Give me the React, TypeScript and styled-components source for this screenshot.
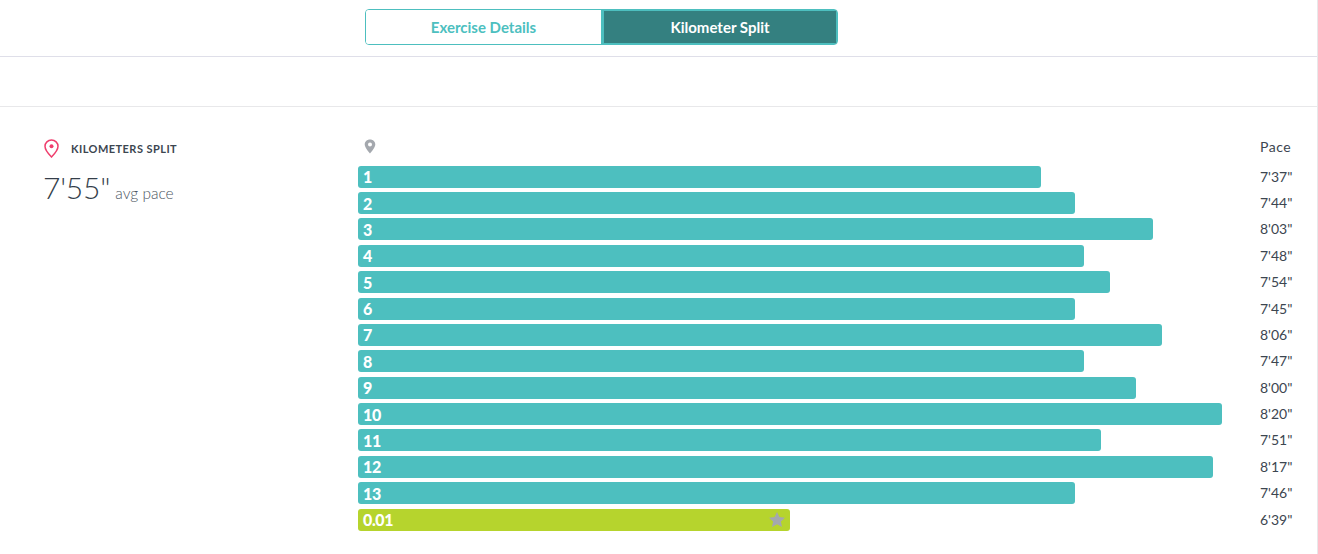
import React from "react";
import styled, { createGlobalStyle } from "styled-components";

const Global = createGlobalStyle`
  html, body { margin: 0; padding: 0; background: #fff; }
  body { font-family: Lato, "Liberation Sans", sans-serif; color: #3c4650; }
`;

const Page = styled.div`
  width: 1318px;
  height: 554px;
  overflow: hidden;
  box-sizing: border-box;
  border-right: 1px solid #e8e8ea;
`;

const TopBar = styled.div`
  height: 57px;
  box-sizing: border-box;
  border-bottom: 1px solid #dfdfe9;
  padding: 9px 0 0 365px;
`;

const Tabs = styled.div`
  display: flex;
  width: 473px;
  height: 36px;
  box-sizing: border-box;
  border: 1px solid #4dbfbf;
  border-radius: 4px;
  overflow: hidden;
`;

const Tab = styled.div<{ $active?: boolean }>`
  box-sizing: border-box;
  width: ${(p) => (p.$active ? 236 : 235)}px;
  display: flex;
  align-items: center;
  justify-content: center;
  font-size: 15px;
  font-weight: 700;
  color: ${(p) => (p.$active ? "#fff" : "#4dbfbf")};
  background: ${(p) => (p.$active ? "#348080" : "#fff")};
  border: ${(p) => (p.$active ? "1px solid #4dbfbf" : "none")};
  border-left-width: ${(p) => (p.$active ? "3px" : "0")};
`;

const SubBar = styled.div`
  height: 50px;
  box-sizing: border-box;
  border-bottom: 1px solid #e8e8ea;
`;

const Content = styled.div`
  display: flex;
  padding-top: 29px;
`;

const Summary = styled.div`
  width: 314px;
  margin-left: 44px;
  flex: none;
`;

const SummaryTitle = styled.div`
  display: flex;
  align-items: center;
  gap: 12px;
  height: 25px;
  font-size: 11px;
  font-weight: 700;
  letter-spacing: 0.45px;
  color: #3c4650;
`;

const PaceLine = styled.div`
  display: flex;
  align-items: baseline;
  gap: 5px;
  margin-top: 8px;
  margin-left: -1px;
`;

const BigPace = styled.span`
  font-size: 30px;
  font-weight: 300;
  letter-spacing: -0.2px;
  color: #343e4a;
`;

const AvgLabel = styled.span`
  font-size: 15.5px;
  font-weight: 300;
  color: #4c5662;
`;

const Chart = styled.div`
  width: 960px;
  flex: none;
`;

const ChartHeader = styled.div`
  display: flex;
  justify-content: space-between;
  align-items: center;
  height: 21px;
  margin-bottom: 8.72px;
  padding-left: 6px;
`;

const PaceHeading = styled.span`
  font-size: 14px;
  letter-spacing: 0.55px;
  color: #3c4650;
  width: 58px;
`;

const Row = styled.div`
  display: flex;
  justify-content: space-between;
  height: 26.38px;
`;

const Bar = styled.div<{ $last?: boolean }>`
  box-sizing: border-box;
  height: 22px;
  display: flex;
  align-items: center;
  justify-content: space-between;
  padding: 0 5px;
  border-radius: 3px;
  background: ${(p) => (p.$last ? "#b6d42d" : "#4dbfbf")};
  color: #fff;
  font-size: 16px;
  font-weight: 900;
  letter-spacing: -0.4px;
`;

const RowPace = styled.span`
  width: 58px;
  line-height: 22px;
  font-size: 14px;
  color: #3c4650;
`;

const rows: [string, number, string][] = [
  ["1", 683, "7'37\""],
  ["2", 717, "7'44\""],
  ["3", 795, "8'03\""],
  ["4", 726, "7'48\""],
  ["5", 752, "7'54\""],
  ["6", 717, "7'45\""],
  ["7", 804, "8'06\""],
  ["8", 726, "7'47\""],
  ["9", 778, "8'00\""],
  ["10", 864, "8'20\""],
  ["11", 743, "7'51\""],
  ["12", 855, "8'17\""],
  ["13", 717, "7'46\""],
  ["0.01", 432, "6'39\""],
];

export default function App() {
  return (
    <Page>
      <Global />
      <TopBar>
        <Tabs>
          <Tab>Exercise Details</Tab>
          <Tab $active>Kilometer Split</Tab>
        </Tabs>
      </TopBar>
      <SubBar />
      <Content>
        <Summary>
          <SummaryTitle>
            <svg width="15" height="19" viewBox="0 0 15 19">
              <path d="M7.5 1C3.9 1 1 3.8 1 7.3 1 11.5 7.5 18 7.5 18S14 11.5 14 7.3C14 3.8 11.1 1 7.5 1Z" fill="none" stroke="#ef3e6d" strokeWidth="1.5" />
              <circle cx="7.5" cy="7.3" r="2" fill="#ef3e6d" />
            </svg>
            KILOMETERS SPLIT
          </SummaryTitle>
          <PaceLine>
            <BigPace>7'55"</BigPace>
            <AvgLabel>avg pace</AvgLabel>
          </PaceLine>
        </Summary>
        <Chart>
          <ChartHeader>
            <svg width="12" height="15" viewBox="0 0 12 15">
              <path fillRule="evenodd" d="M6 .5C2.9.5.7 2.8.7 5.6.7 9 6 14.5 6 14.5S11.3 9 11.3 5.6C11.3 2.8 9.1.5 6 .5ZM6 3.6a2 2 0 1 1 0 4 2 2 0 0 1 0-4Z" fill="#a4a8ae" />
            </svg>
            <PaceHeading>Pace</PaceHeading>
          </ChartHeader>
          {rows.map(([label, width, pace], i) => (
            <Row key={label}>
              <Bar $last={i === rows.length - 1} style={{ width }}>
                {label}
                {i === rows.length - 1 && (
                  <svg width="16" height="15" viewBox="0 0 16 15">
                    <path d="M8 0l2.4 5 5.6.7-4.1 3.8 1.1 5.5L8 12.3 3 15l1.1-5.5L0 5.7 5.6 5Z" fill="#a4a8ae" />
                  </svg>
                )}
              </Bar>
              <RowPace>{pace}</RowPace>
            </Row>
          ))}
        </Chart>
      </Content>
    </Page>
  );
}
